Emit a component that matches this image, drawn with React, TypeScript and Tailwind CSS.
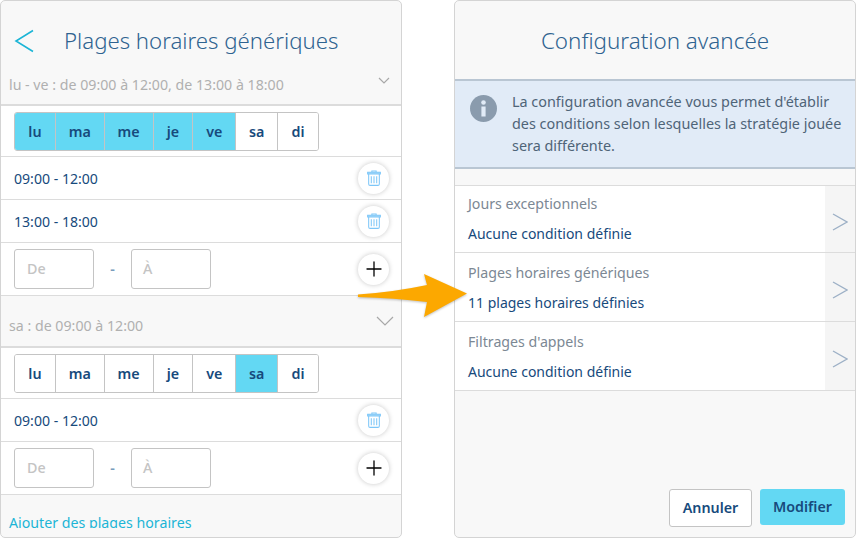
import { Plus } from 'lucide-react'

const DAYS = [
  { label: 'lu', width: 'w-[40px]' },
  { label: 'ma', width: 'w-[49px]' },
  { label: 'me', width: 'w-[49px]' },
  { label: 'je', width: 'w-[40px]' },
  { label: 've', width: 'w-[43px]' },
  { label: 'sa', width: 'w-[42px]' },
  { label: 'di', width: 'w-[41px]' },
]

const font = { fontFamily: '"Noto Sans", sans-serif' }

function DayPicker({ active }: { active: string[] }) {
  return (
    <div className="flex h-[39px] w-[305px] overflow-hidden rounded-[3px] border border-[#c4c4c4] bg-white">
      {DAYS.map((day, i) => (
        <div
          key={day.label}
          className={`${day.width} flex items-center justify-center text-[14.3px] font-semibold text-[#174a7c] ${i > 0 ? 'border-l border-[#c4c4c4]' : ''} ${active.includes(day.label) ? 'bg-[#63d8f3]' : 'bg-white'}`}
        >
          {day.label}
        </div>
      ))}
    </div>
  )
}

function TrashIcon() {
  return (
    <svg width="14" height="16" viewBox="0 0 15 17" fill="none" stroke="#7cc6f8" strokeWidth="1.1">
      <path d="M5.2 2V0.9h4.6V2" />
      <path d="M0.7 2.3h13.6v1.9H0.7z" fill="#a8daf9" />
      <path d="M1.8 4.2v10.6c0 .9.6 1.6 1.5 1.6h8.4c.9 0 1.5-.7 1.5-1.6V4.2" />
      <path d="M4.6 6.5v7.6M7.5 6.5v7.6M10.4 6.5v7.6" />
    </svg>
  )
}

function RoundButton({ kind }: { kind: 'trash' | 'plus' }) {
  return (
    <div className="flex h-[31px] w-[31px] items-center justify-center rounded-full bg-white shadow-[0_0_5px_rgba(0,0,0,0.22)]">
      {kind === 'trash' ? <TrashIcon /> : <Plus size={24} strokeWidth={1.3} className="text-black" />}
    </div>
  )
}

function TimeRow({ range }: { range: string }) {
  return (
    <div className="flex h-[43px] items-center justify-between border-b border-[#dcdcdc] bg-white pl-[13px] pr-[12px]">
      <span className="pt-[2px] text-[14.1px] text-[#174a7c]">{range}</span>
      <RoundButton kind="trash" />
    </div>
  )
}

function AddRow() {
  return (
    <div className="flex h-[53px] items-center border-b border-[#dcdcdc] bg-white pl-[13px] pr-[12px]">
      <div className="flex h-[40px] w-[80px] items-center rounded-[3px] border border-[#c4c4c4] pl-[12px] text-[14.3px] font-medium text-[#c4c4c4]">De</div>
      <span className="w-[37px] text-center text-[14.3px] font-semibold text-[#7a9cbc]">-</span>
      <div className="flex h-[40px] w-[80px] items-center rounded-[3px] border border-[#c4c4c4] pl-[11px] text-[14.3px] font-medium text-[#c4c4c4]">À</div>
      <div className="ml-auto">
        <RoundButton kind="plus" />
      </div>
    </div>
  )
}

function ConditionRow({ title, value, first }: { title: string; value: string; first?: boolean }) {
  return (
    <div className={`flex border-b border-[#dcdcdc] bg-white ${first ? 'h-[67px]' : 'h-[69px]'}`}>
      <div className={`flex-1 pl-[13px] ${first ? 'pt-[8px]' : 'pt-[10px]'}`}>
        <div className="text-[14.2px] leading-[20px] text-[#7c8894]">{title}</div>
        <div className="mt-[10px] text-[14px] leading-[20px] text-[#174a7c]">{value}</div>
      </div>
      <div className="flex w-[30px] items-center justify-center bg-[#f5f5f5] pt-[6px]">
        <svg width="16" height="18" viewBox="0 0 16 18" fill="none" stroke="#9db0c6" strokeWidth="1.4">
          <path d="M1 1l14 8-14 8" />
        </svg>
      </div>
    </div>
  )
}

export default function App() {
  return (
    <div className="relative flex h-[538px] w-[856px] justify-between bg-white" style={font}>
      {/* Left panel */}
      <div className="h-[538px] w-[402px] overflow-hidden rounded-[5px] border border-[#d4d4d4] bg-[#f8f8f8]">
        <div className="relative h-[105px] border-b-2 border-[#dcdcdc]">
          <div className="flex items-center pl-[13px] pt-[22px]">
            <svg width="20" height="24" viewBox="0 0 20 24" fill="none" stroke="#1cb5d6" strokeWidth="1.6">
              <path d="M19 1.5L2 12l17 10.5" />
            </svg>
            <span className="ml-[30px] pt-[1px] text-[22.2px] font-light leading-[34px] text-[#2f6390]">Plages horaires génériques</span>
          </div>
          <div className="pl-[8px] pt-[17px] text-[14.2px] leading-[20px] text-[#b0b0b0]">lu - ve : de 09:00 à 12:00, de 13:00 à 18:00</div>
          <svg className="absolute right-[11px] top-[76px]" width="12" height="8" viewBox="0 0 12 8" fill="none" stroke="#a8a8a8" strokeWidth="1.2">
            <path d="M1 1l5 5 5-5" />
          </svg>
        </div>
        <div className="h-[51px] border-b border-[#dcdcdc] bg-white pl-[13px] pt-[6px]">
          <DayPicker active={['lu', 'ma', 'me', 'je', 've']} />
        </div>
        <TimeRow range="09:00 - 12:00" />
        <TimeRow range="13:00 - 18:00" />
        <AddRow />
        <div className="relative h-[52px] border-b-2 border-[#dcdcdc]">
          <div className="pl-[8px] pt-[20px] text-[14.2px] leading-[20px] text-[#b0b0b0]">sa : de 09:00 à 12:00</div>
          <svg className="absolute right-[7px] top-[20px]" width="18" height="11" viewBox="0 0 18 11" fill="none" stroke="#a8a8a8" strokeWidth="1.2">
            <path d="M1 1l8 8 8-8" />
          </svg>
        </div>
        <div className="h-[51px] border-b border-[#dcdcdc] bg-white pl-[13px] pt-[6px]">
          <DayPicker active={['sa']} />
        </div>
        <TimeRow range="09:00 - 12:00" />
        <AddRow />
        <div className="h-[33px] overflow-hidden pl-[8px] pt-[18px] text-[14.2px] leading-[20px] text-[#1cb5d6]">Ajouter des plages horaires</div>
      </div>

      {/* Right panel */}
      <div className="flex h-[538px] w-[402px] flex-col overflow-hidden rounded-[5px] border border-[#d4d4d4] bg-[#f8f8f8]">
        <div className="flex h-[78px] items-center justify-center pt-[2px] text-[22.4px] font-light text-[#2f6390]">Configuration avancée</div>
        <div className="flex h-[90px] border-y-2 border-[#b9c6d3] bg-[#e1ebf7] pl-[15px] pt-[10px]">
          <svg className="mt-[4px] shrink-0" width="27" height="27" viewBox="0 0 27 27">
            <circle cx="13.5" cy="13.5" r="13.5" fill="#8a9bad" />
            <circle cx="13.5" cy="7.5" r="2.3" fill="#e1ebf7" />
            <rect x="11.4" y="11.5" width="4.2" height="10" fill="#e1ebf7" />
          </svg>
          <div className="ml-[15px] text-[14.4px] leading-[22px] text-[#4f6478]">
            La configuration avancée vous permet d'établir<br />
            des conditions selon lesquelles la stratégie jouée<br />
            sera différente.
          </div>
        </div>
        <div className="mt-[16px] border-t border-[#dcdcdc]">
          <ConditionRow first title="Jours exceptionnels" value="Aucune condition définie" />
          <ConditionRow title="Plages horaires génériques" value="11 plages horaires définies" />
          <ConditionRow title="Filtrages d'appels" value="Aucune condition définie" />
        </div>
        <div className="mt-auto flex items-start justify-end gap-[8px] pb-[10px] pr-[10px]">
          <div className="flex h-[38px] w-[83px] items-center justify-center rounded-[3px] border border-[#c4c4c4] bg-white text-[14.3px] font-semibold text-[#174a7c]">Annuler</div>
          <div className="flex h-[36px] w-[85px] items-center justify-center rounded-[3px] bg-[#63d8f3] text-[14.3px] font-semibold text-[#174a7c]">Modifier</div>
        </div>
      </div>

      {/* Orange arrow between the panels */}
      <svg className="absolute left-[356px] top-[272px] drop-shadow-[0_1px_1px_rgba(0,0,0,0.25)]" width="114" height="48" viewBox="0 0 114 48">
        <path d="M2 22.5 Q38 20 71 13 L68 2 L111 21.5 L68 45 L71 30 Q38 26 2 25 Z" fill="#fca800" />
      </svg>
    </div>
  )
}
